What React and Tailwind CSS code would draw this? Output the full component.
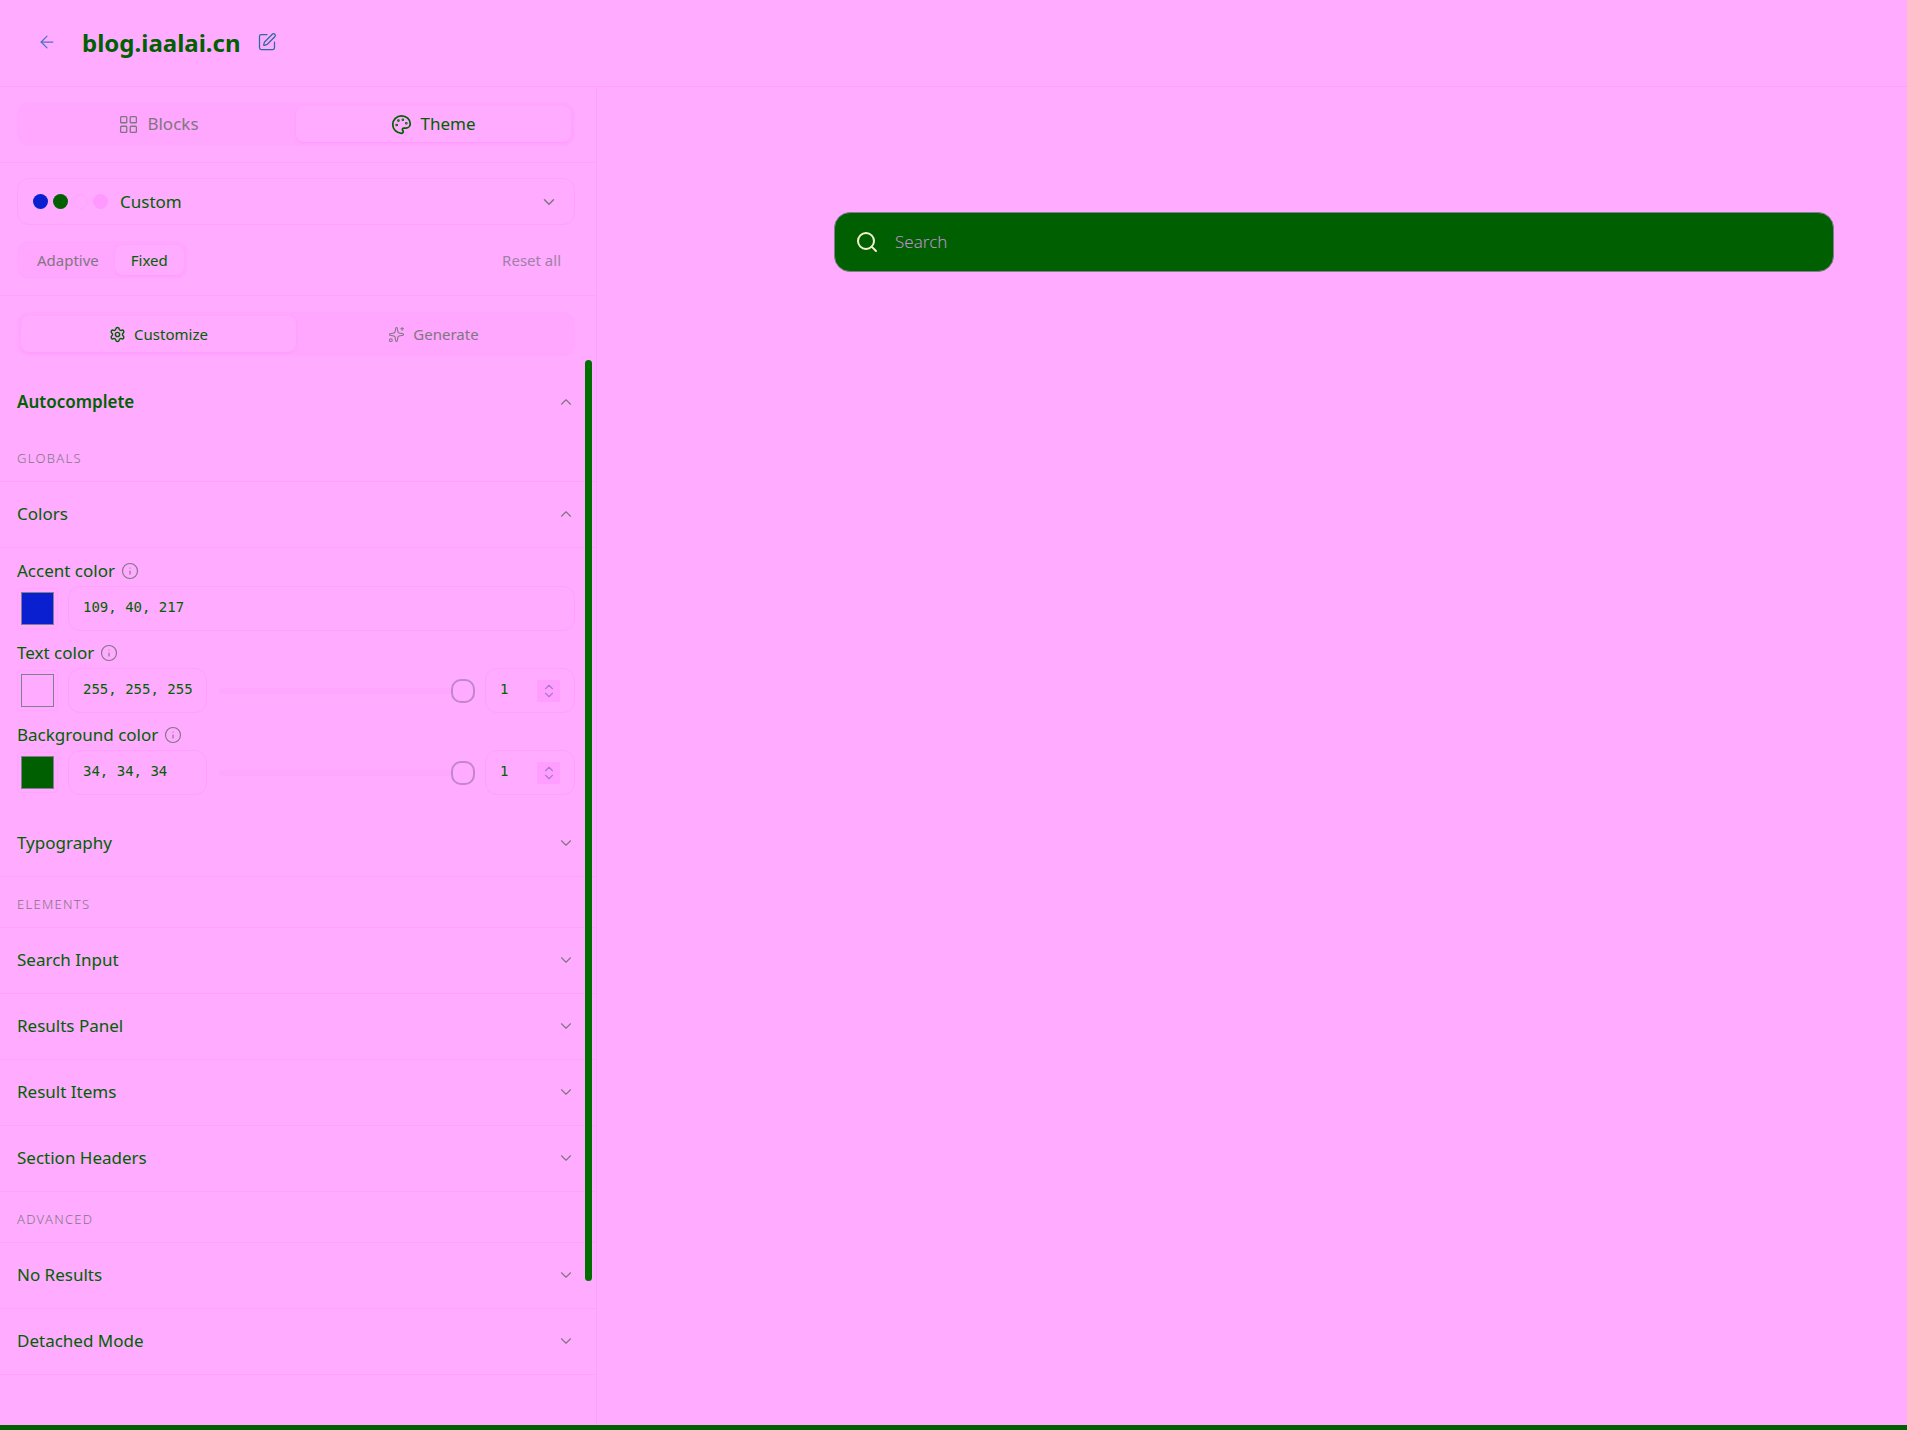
import React, { useState } from 'react';
import {
  ArrowLeft,
  ChevronDown,
  ChevronUp,
  Info,
  LayoutGrid,
  Palette,
  Search,
  Settings,
  Sparkles,
  SquarePen,
} from 'lucide-react';

const Tab = ({ icon: Icon, label, active, size, className }) => (
  <button
    type="button"
    className={`flex flex-1 items-center justify-center gap-2 rounded-lg ${className} ${
      active ? 'bg-[#ffabff] text-[#005f00] shadow-sm shadow-[#ff9bff]' : 'text-[#7f7680]'
    }`}
  >
    <Icon size={size} strokeWidth={active ? 2 : 1.5} />
    {label}
  </button>
);

const Section = ({ label, open }) => {
  const Chevron = open ? ChevronUp : ChevronDown;
  return (
    <button
      type="button"
      className="flex h-[66px] w-full items-center justify-between border-b border-[#ffa0ff] pb-0.5 pl-[17px] pr-[21px] text-[17px]"
    >
      {label}
      <Chevron size={18} strokeWidth={1.5} className="text-[#7f7680]" />
    </button>
  );
};

const GroupTitle = ({ children }) => (
  <h3 className="flex h-[51px] items-center border-b border-[#ffa0ff] px-[17px] pt-1.5 text-[13px] font-light tracking-widest text-[#7f7680]">
    {children}
  </h3>
);

const ColorField = ({ id, label, value, swatch, alpha }) => {
  const [text, setText] = useState(value);
  const [opacity, setOpacity] = useState(1);

  return (
    <div>
      <label htmlFor={id} className="flex h-[30px] items-center gap-1.5 text-[17px]">
        {label}
        <Info size={18} strokeWidth={1.5} className="text-[#7f7680]" />
      </label>
      <div className="flex h-[45px] items-center">
        <button
          type="button"
          aria-label={`Pick ${label}`}
          className="mr-2.5 h-[41px] w-[41px] shrink-0 rounded border border-[#ffa3ff] p-[3px]"
        >
          <span className={`block h-full w-full border border-[#80808a] ${swatch}`} />
        </button>
        <input
          id={id}
          value={text}
          onChange={(e) => setText(e.target.value)}
          className={`h-full rounded-xl border border-[#ffa0ff] bg-transparent px-3.5 pb-1 font-['DejaVu_Sans_Mono',monospace] text-sm outline-none ${
            alpha ? 'w-[139px]' : 'w-full'
          }`}
        />
        {alpha && (
          <>
            <input
              type="range"
              min="0"
              max="1"
              step="0.01"
              value={opacity}
              onChange={(e) => setOpacity(e.target.value)}
              aria-label={`${label} opacity slider`}
              className="ml-3 mr-2.5 h-1.5 min-w-0 flex-1 appearance-none rounded-full bg-[#ffa7ff] [&::-webkit-slider-thumb]:h-6 [&::-webkit-slider-thumb]:w-6 [&::-webkit-slider-thumb]:appearance-none [&::-webkit-slider-thumb]:rounded-[10px] [&::-webkit-slider-thumb]:border-2 [&::-webkit-slider-thumb]:border-[#c486ca] [&::-webkit-slider-thumb]:bg-[#ffabff]"
            />
            <div className="flex h-full w-[90px] shrink-0 items-center justify-between rounded-xl border border-[#ffa0ff] px-3.5">
              <input
                value={opacity}
                onChange={(e) => setOpacity(e.target.value)}
                aria-label={`${label} opacity`}
                className="w-6 bg-transparent pb-1 font-['DejaVu_Sans_Mono',monospace] text-sm outline-none"
              />
              <span className="flex h-[22px] w-[23px] flex-col items-center justify-between bg-[#ff9eff] text-[#a87ad0]">
                <button type="button" aria-label="Increase" className="h-[11px]">
                  <ChevronUp size={14} strokeWidth={2} />
                </button>
                <button type="button" aria-label="Decrease" className="flex h-[11px] items-end">
                  <ChevronDown size={14} strokeWidth={2} />
                </button>
              </span>
            </div>
          </>
        )}
      </div>
    </div>
  );
};

const Sidebar = () => (
  <aside className="flex w-[597px] shrink-0 flex-col border-r border-[#ffa0ff]">
    <div className="border-b border-[#ffa0ff] pb-4 pl-[17px] pr-[21px] pt-[15px]">
      <div className="flex h-11 rounded-xl bg-[#ffa6ff] p-1">
        <Tab icon={LayoutGrid} label="Blocks" size={21} className="text-[17px]" />
        <Tab icon={Palette} label="Theme" size={21} className="text-[17px]" active />
      </div>
    </div>

    <div className="border-b border-[#ffa0ff] pb-4 pl-[17px] pr-[21px] pt-[15px]">
      <button
        type="button"
        className="flex h-[47px] w-full items-center rounded-xl border border-[#ffa0ff] pl-[15px] pr-4 text-[17px]"
      >
        <span className="mr-3 flex gap-[5px]">
          <span className="h-[15px] w-[15px] rounded-full bg-[#0a20d0]" />
          <span className="h-[15px] w-[15px] rounded-full bg-[#005f00]" />
          <span className="h-[15px] w-[15px] rounded-full border border-[#ffa4ff]" />
          <span className="h-[15px] w-[15px] rounded-full bg-[#ff98ff]" />
        </span>
        Custom
        <ChevronDown size={18} strokeWidth={2} className="ml-auto text-[#7f7680]" />
      </button>
      <div className="mt-4 flex h-[38px] items-center justify-between">
        <div className="flex h-full items-center rounded-xl bg-[#ffa6ff] p-1 text-[15px]">
          <button type="button" className="px-4 text-[#7f7680]">
            Adaptive
          </button>
          <button type="button" className="h-full rounded-lg bg-[#ffabff] px-4 shadow-sm shadow-[#ff9bff]">
            Fixed
          </button>
        </div>
        <button type="button" className="pr-3.5 text-[15px] text-[#a080a8]">
          Reset all
        </button>
      </div>
    </div>

    <div className="pl-[17px] pr-[21px] pt-4">
      <div className="flex h-11 rounded-xl bg-[#ffa6ff] p-1">
        <Tab icon={Settings} label="Customize" size={17} className="text-[15px]" active />
        <Tab icon={Sparkles} label="Generate" size={17} className="text-[15px]" />
      </div>
    </div>

    <div className="relative flex-1 pt-4">
      <button
        type="button"
        className="flex h-[59px] w-full items-center justify-between pl-[17px] pr-[21px] text-[17px] font-semibold"
      >
        Autocomplete
        <ChevronUp size={18} strokeWidth={1.5} className="text-[#7f7680]" />
      </button>
      <GroupTitle>GLOBALS</GroupTitle>
      <Section label="Colors" open />
      <div className="flex flex-col gap-[7px] pb-4 pl-[17px] pr-[21px] pt-2">
        <ColorField id="accent" label="Accent color" value="109, 40, 217" swatch="bg-[#0a20d0]" />
        <ColorField id="text" label="Text color" value="255, 255, 255" swatch="bg-transparent" alpha />
        <ColorField id="background" label="Background color" value="34, 34, 34" swatch="bg-[#005f00]" alpha />
      </div>
      <Section label="Typography" />
      <GroupTitle>ELEMENTS</GroupTitle>
      <Section label="Search Input" />
      <Section label="Results Panel" />
      <Section label="Result Items" />
      <Section label="Section Headers" />
      <GroupTitle>ADVANCED</GroupTitle>
      <Section label="No Results" />
      <Section label="Detached Mode" />
      {/* scrollbar thumb */}
      <div className="absolute right-1 top-1 h-[921px] w-[7px] rounded-full bg-[#006f00]" />
    </div>
  </aside>
);

export default function App() {
  return (
    <div className="flex min-h-screen flex-col border-b-[5px] border-[#005f00] bg-[#ffabff] font-['Noto_Sans',sans-serif] text-[#005f00]">
      <header className="flex h-[87px] items-center border-b border-[#ffa0ff] pl-[37px]">
        <a href="#back" aria-label="Back" className="mb-0.5 text-[#5070c8]">
          <ArrowLeft size={20} strokeWidth={1.5} />
        </a>
        <h1 className="ml-[25px] mr-4 text-2xl font-bold">blog.iaalai.cn</h1>
        <button type="button" aria-label="Rename" className="mb-0.5 text-[#2a6aa0]">
          <SquarePen size={20} strokeWidth={1.5} />
        </button>
      </header>
      <div className="flex flex-1">
        <Sidebar />
        <main className="flex-1 pl-[237px] pr-[73px] pt-[125px]">
          <label className="flex h-[60px] items-center rounded-2xl border border-[#80808a] bg-[#005f00] pl-5">
            <Search size={24} strokeWidth={2} className="text-[#f5f0d0]" />
            <input
              type="search"
              placeholder="Search"
              aria-label="Search"
              className="ml-4 flex-1 bg-transparent text-[17px] font-light outline-none placeholder:text-[#c090d0]"
            />
          </label>
        </main>
      </div>
    </div>
  );
}
